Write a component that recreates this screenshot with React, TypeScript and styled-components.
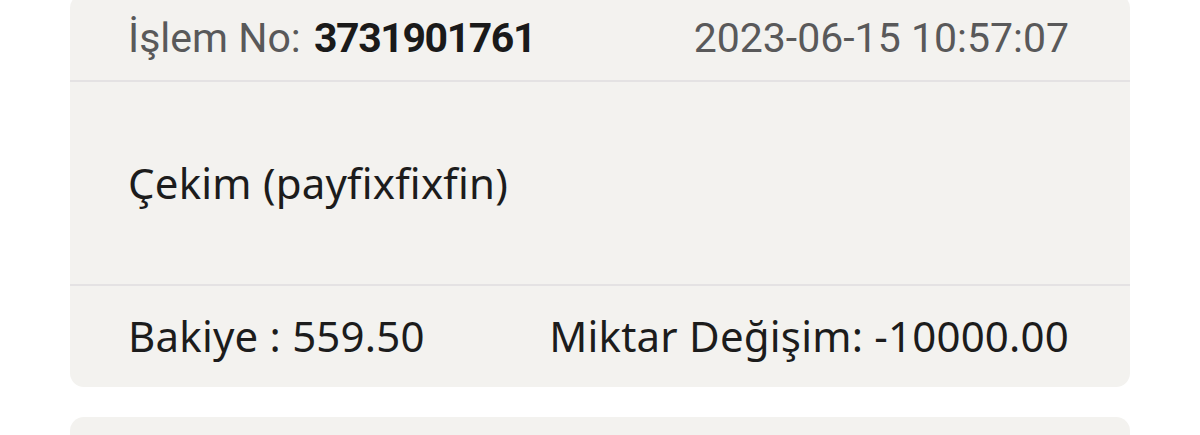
import React from "react";
import styled, { createGlobalStyle } from "styled-components";

const Global = createGlobalStyle`
  html, body { margin: 0; padding: 0; background: #ffffff; }
  body { font-family: "Noto Sans", sans-serif; overflow: hidden; }
`;

const Page = styled.div`
  display: flex;
  flex-direction: column;
  gap: 30px;
  padding: 0 70px;
  margin-top: -6px;
`;

const Card = styled.div`
  background: #f3f2ef;
  border-radius: 14px;
  display: flex;
  flex-direction: column;
`;

const Row = styled.div<{ $h: number; $top?: number }>`
  box-sizing: border-box;
  height: ${(p) => p.$h}px;
  display: flex;
  align-items: center;
  justify-content: space-between;
  padding: ${(p) => p.$top ?? 0}px 61px 0 58px;
  white-space: nowrap;
`;

const HeaderText = styled.span`
  font-family: Roboto, "Liberation Sans", sans-serif;
  font-size: 41px;
  line-height: 1.2;
  color: #59595a;
`;

const TxnNo = styled.b`
  color: #1a1a1a;
  font-weight: 700;
  letter-spacing: -1.4px;
  margin-left: 3px;
`;

const BodyText = styled.span`
  font-family: "Noto Sans", sans-serif;
  font-size: 42px;
  line-height: 1.2;
  letter-spacing: 0.2px;
  color: #1c1c1c;
`;

const Divider = styled.div`
  height: 2px;
  background: #e4e2e3;
`;

export default function App() {
  return (
    <>
      <Global />
      <Page>
        <Card>
          <Row $h={86} $top={4}>
            <HeaderText>
              İşlem No: <TxnNo>3731901761</TxnNo>
            </HeaderText>
            <HeaderText>2023-06-15 10:57:07</HeaderText>
          </Row>
          <Divider />
          <Row $h={202}>
            <BodyText>Çekim (payfixfixfin)</BodyText>
          </Row>
          <Divider />
          <Row $h={101}>
            <BodyText>Bakiye : 559.50</BodyText>
            <BodyText>Miktar Değişim: -10000.00</BodyText>
          </Row>
        </Card>
        <Card>
          <Row $h={120} />
        </Card>
      </Page>
    </>
  );
}
